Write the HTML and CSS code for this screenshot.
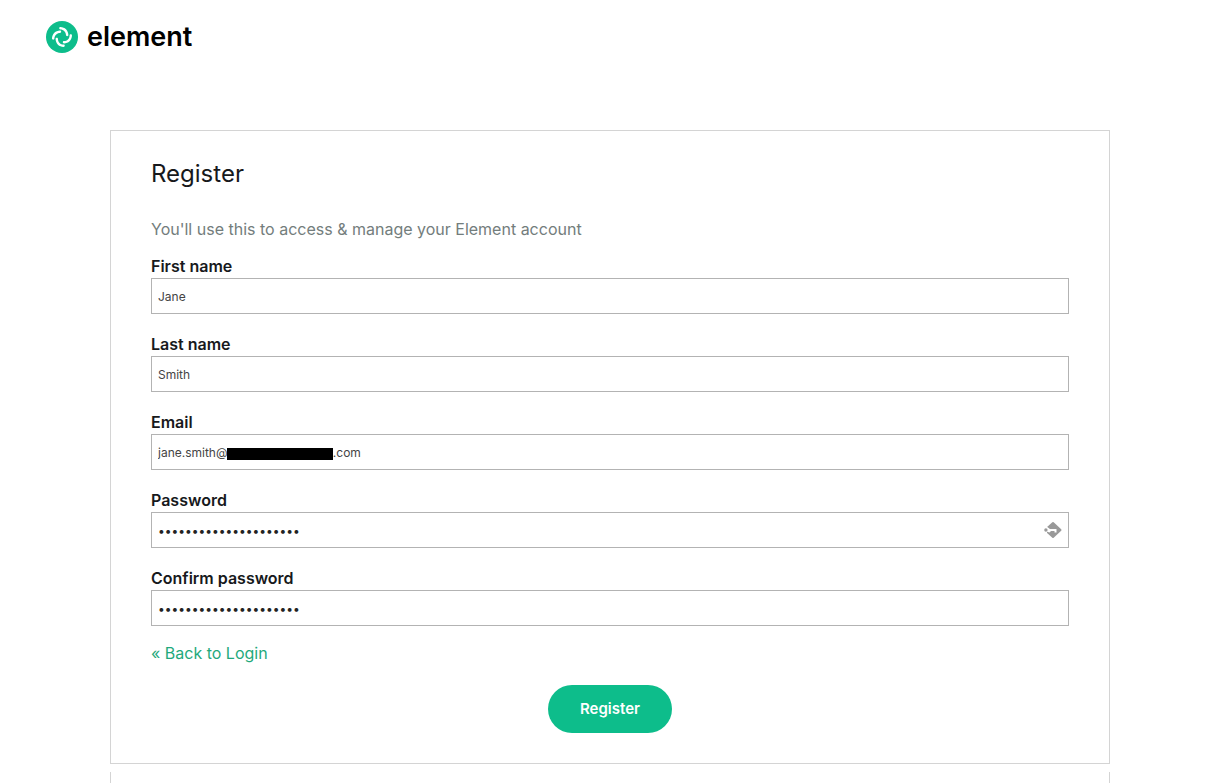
FILE: index.html
```html
<!DOCTYPE html>
<html lang="en">
<head>
    <meta charset="UTF-8">
    <meta name="viewport" content="width=device-width, initial-scale=1.0">
    <title>Register | Element</title>
    <link rel="stylesheet" href="styles.css">
</head>
<body>

<header class="header">
    <a class="logo" href="#">
        <svg class="logo-mark" viewBox="0 0 32 32" aria-hidden="true">
            <defs>
                <path id="arc" d="M19.44 3.24C19.44 1.45 20.89 0 22.68 0C34.61 0 44.28 9.67 44.28 21.6C44.28 23.39 42.83 24.84 41.04 24.84C39.25 24.84 37.8 23.39 37.8 21.6C37.8 13.25 31.03 6.48 22.68 6.48C20.89 6.48 19.44 5.03 19.44 3.24Z"/>
            </defs>
            <circle cx="16" cy="16" r="16" fill="#0dbd8b"/>
            <g fill="#fff" transform="translate(6 6) scale(.37)">
                <use href="#arc"/>
                <use href="#arc" transform="rotate(90 27 27)"/>
                <use href="#arc" transform="rotate(180 27 27)"/>
                <use href="#arc" transform="rotate(270 27 27)"/>
            </g>
        </svg>
        <span class="logo-name">element</span>
    </a>
</header>

<main class="container">
    <form class="panel">
        <h1>Register</h1>
        <p class="intro">You'll use this to access &amp; manage your Element account</p>

        <div class="field">
            <label for="first-name">First name</label>
            <input type="text" id="first-name" value="Jane">
        </div>

        <div class="field">
            <label for="last-name">Last name</label>
            <input type="text" id="last-name" value="Smith">
        </div>

        <div class="field">
            <label for="email">Email</label>
            <div class="control">
                <input type="text" id="email" inputmode="email" value="jane.smith@&emsp;&emsp;&emsp;&emsp;&emsp;&emsp;&emsp;&emsp;&ensp;&thinsp;&hairsp;.com">
                <span class="redacted"></span>
            </div>
        </div>

        <div class="field">
            <label for="password">Password</label>
            <div class="control">
                <input type="password" id="password" value="aaaaaaaaaaaaaaaaaaaaa">
                <svg class="key-icon" viewBox="0 0 18 18" aria-hidden="true">
                    <path d="M9 2L16.5 9L9 16L4 11.500V6.500Z" fill="#999" stroke="#999" stroke-width="2" stroke-linejoin="round"/>
                    <path d="M2.500 5.500L6 8H12.500V11.500H10.500V10H7L5.500 11.500L2.500 10.500Z" fill="#fff"/>
                    <circle cx="1.900" cy="9" r="1.700" fill="#999"/>
                </svg>
            </div>
        </div>

        <div class="field">
            <label for="confirm">Confirm password</label>
            <input type="password" id="confirm" value="aaaaaaaaaaaaaaaaaaaaa">
        </div>

        <a class="back" href="#">« Back to Login</a>

        <div class="buttons">
            <button type="submit">Register</button>
        </div>
    </form>

    <div class="panel-next"></div>
</main>

</body>
</html>
```

FILE: styles.css
```css
* {
    margin: 0;
    padding: 0;
    box-sizing: border-box;
}

body {
    font-family: Inter, "Liberation Sans", sans-serif;
    font-size: 16px;
    line-height: 24px;
    color: #17191c;
    background: #fff;
    display: flex;
    flex-direction: column;
    min-height: 100vh;
    padding-right: 9px;
}

/* Header */
.header {
    display: flex;
    padding: 21px 46px;
}

.logo {
    display: flex;
    align-items: center;
    gap: 9px;
    color: #000;
    text-decoration: none;
}

.logo-mark {
    width: 32px;
    height: 32px;
}

.logo-name {
    font-size: 27px;
    font-weight: 600;
    line-height: 32px;
}

/* Registration form */
.container {
    width: 100%;
    max-width: 1000px;
    margin: 56px auto 0;
    flex: 1;
    display: flex;
    flex-direction: column;
}

.panel {
    border: 1px solid #d4d4d4;
    padding: 25px 40px 30px;
}

h1 {
    font-size: 24px;
    font-weight: 400;
    line-height: 36px;
    margin-bottom: 25px;
}

.intro {
    color: #737d7c;
    margin-bottom: 13px;
}

.field {
    margin-bottom: 18px;
}

.field label {
    display: block;
    font-weight: 600;
}

.field input {
    display: block;
    width: 100%;
    height: 36px;
    padding: 0 6px;
    border: 1px solid #b3b3b3;
    background: #fff;
    color: #444;
    font-family: inherit;
    font-size: 12px;
}

.field input[type="password"] {
    color: #222;
}

.control {
    position: relative;
}

.redacted {
    position: absolute;
    left: 76px;
    top: 14px;
    width: 106px;
    height: 12px;
    background: #000;
}

.key-icon {
    position: absolute;
    right: 7px;
    top: 9px;
    width: 18px;
    height: 18px;
}

.back {
    display: block;
    margin-top: -3px;
    color: #1fa97c;
    text-decoration: none;
}

.buttons {
    display: flex;
    justify-content: center;
    margin-top: 20px;
}

button {
    padding: 12px 32px;
    border: none;
    border-radius: 24px;
    background: #0dbd8b;
    color: #fff;
    font-family: inherit;
    font-size: 15px;
    font-weight: 600;
    line-height: 24px;
    cursor: pointer;
}

.panel-next {
    flex: 1;
    margin-top: 8px;
    border: solid #d4d4d4;
    border-width: 0 1px;
}
```
